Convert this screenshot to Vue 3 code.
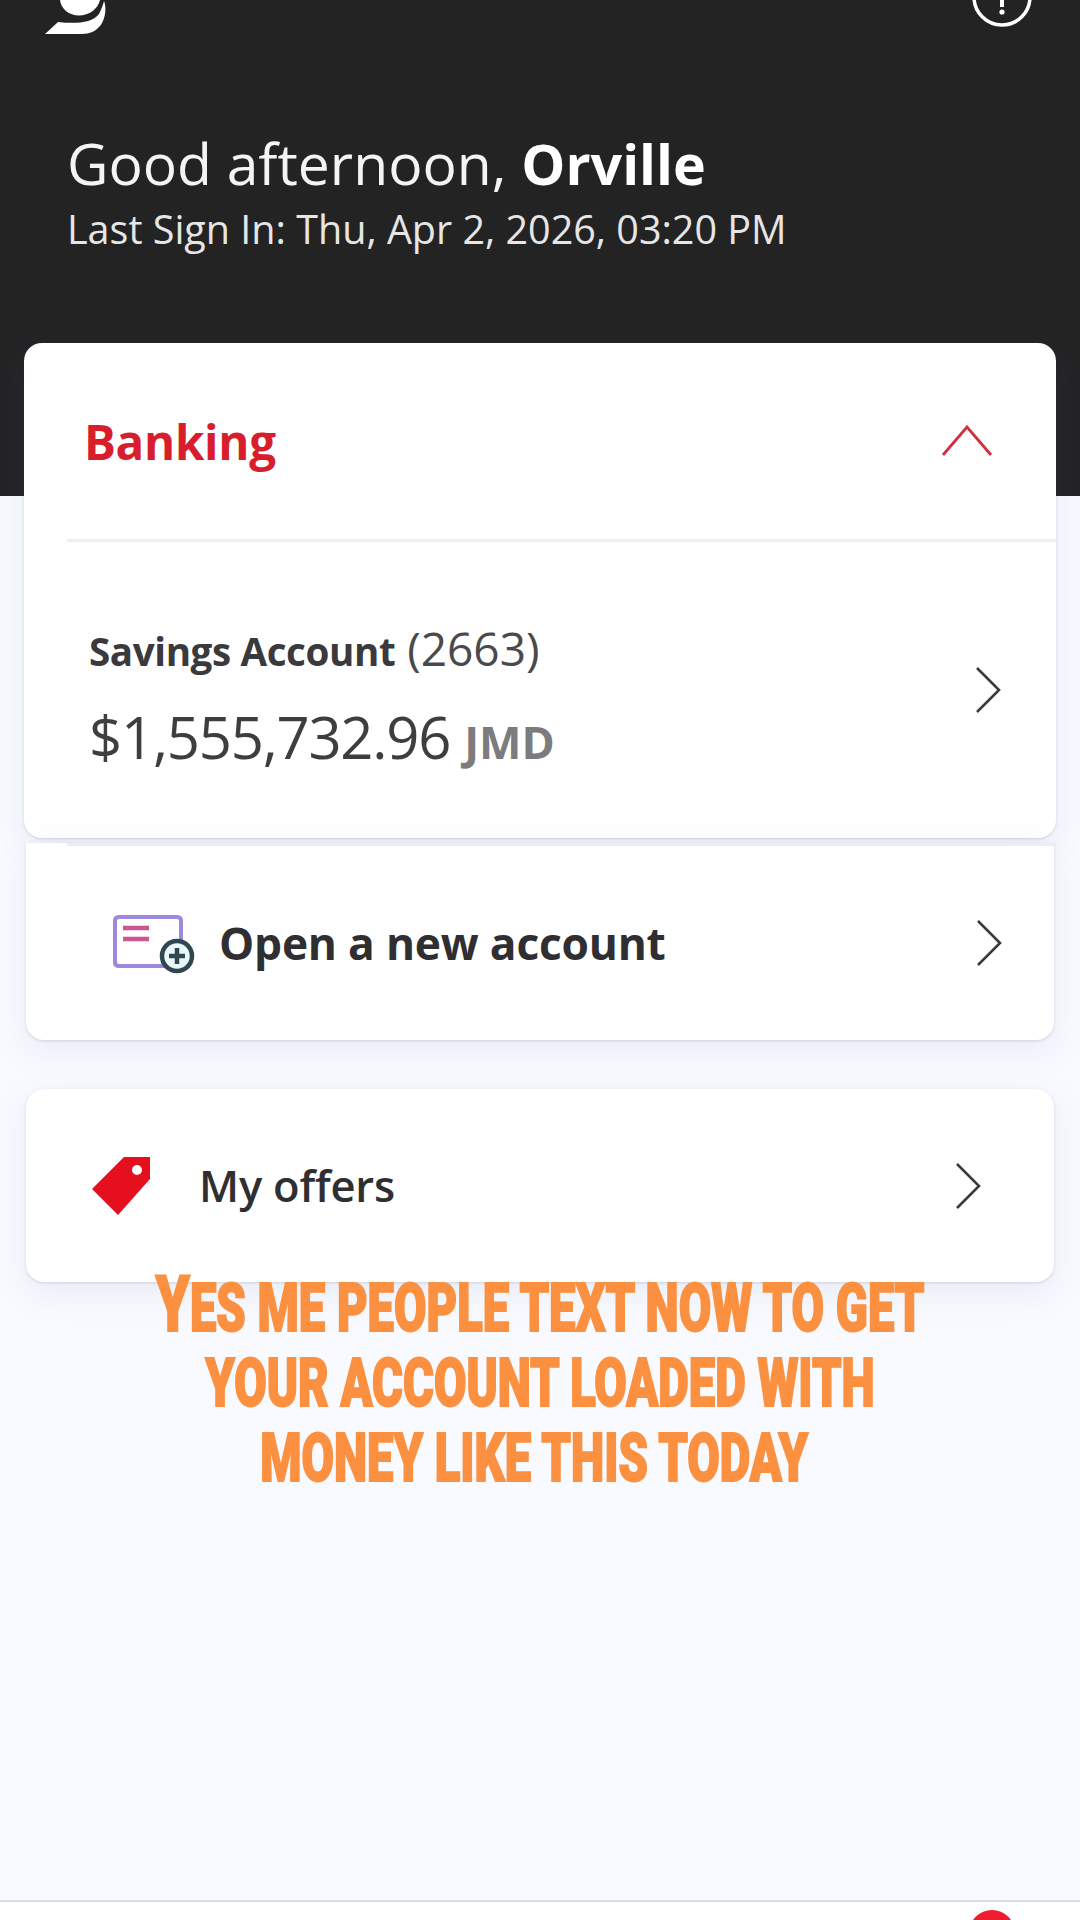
<template>
  <div class="page">
    <header class="hero">
      <div class="topbar">
        <svg class="logo" viewBox="0 0 62 36" width="62" height="36">
          <path d="M16 0C17 9 25 15.500 35 15.500C45 15.500 54 9 56 0Z" fill="#fff" />
          <path d="M1 34L14 22C32 24 48 23 55 14C57 10 59 5 60 1C62 6 62 14 59 21C55 30 47 34 38 34Z" fill="#fff" />
        </svg>
        <svg class="help" viewBox="0 0 64 28" width="64" height="28">
          <circle cx="32" cy="-3" r="28" fill="none" stroke="#fff" stroke-width="3.5" />
          <rect x="30" y="0" width="4" height="7" fill="#fff" />
          <circle cx="32" cy="12" r="2.6" fill="#fff" />
        </svg>
      </div>
      <h1 class="greeting">Good afternoon, <b>{{ userName }}</b></h1>
      <p class="last-sign">Last Sign In: {{ lastSignIn }}</p>
    </header>

    <main class="content">
      <section class="card card-banking">
        <div class="banking-head">
          <span class="banking-title">Banking</span>
          <svg class="caret-up" viewBox="0 0 52 32" width="52" height="32">
            <path d="M2 30L26 2L50 30" fill="none" stroke="#d0303c" stroke-width="2.8" />
          </svg>
        </div>
        <div class="divider"></div>
        <div class="account-row">
          <div class="account-info">
            <div class="account-name"><b>Savings Account</b> (2663)</div>
            <div class="account-balance">$1,555,732.96 <span class="currency">JMD</span></div>
          </div>
          <svg class="chevron" viewBox="0 0 26 48" width="26" height="48">
            <path d="M2 2L24 24L2 46" fill="none" stroke="#3a3a3c" stroke-width="2.6" />
          </svg>
        </div>
      </section>

      <section class="card card-open">
        <div class="divider"></div>
        <div class="link-row row-open">
          <svg class="icon-account" viewBox="0 0 84 62" width="84" height="62">
            <path d="M54 54H8Q4 54 4 50V9Q4 5 8 5H66Q70 5 70 9V28" fill="#fff" stroke="#9d88dd" stroke-width="4" />
            <path d="M12 16H38M12 27H38" stroke="#c9568f" stroke-width="4.500" />
            <circle cx="66" cy="44" r="15" fill="#e9f8fb" stroke="#30474f" stroke-width="4.500" />
            <path d="M58 44H74M66 36V52" stroke="#30474f" stroke-width="4.500" />
          </svg>
          <span class="link-label">Open a new account</span>
          <svg class="chevron" viewBox="0 0 26 48" width="26" height="48">
            <path d="M2 2L24 24L2 46" fill="none" stroke="#3a3a3c" stroke-width="2.6" />
          </svg>
        </div>
      </section>

      <section class="card card-offers">
        <div class="link-row row-offers">
          <svg class="icon-tag" viewBox="0 0 60 60" width="60" height="60">
            <path fill-rule="evenodd" d="M33 1H59V23L27 59L1 33ZM46 9A5 5 0 1 0 46 19A5 5 0 1 0 46 9Z" fill="#e60f1e" />
          </svg>
          <span class="link-label">My offers</span>
          <svg class="chevron" viewBox="0 0 26 48" width="26" height="48">
            <path d="M2 2L24 24L2 46" fill="none" stroke="#3a3a3c" stroke-width="2.6" />
          </svg>
        </div>
      </section>

      <div class="promo">
        <div v-for="(line, i) in promoLines" :key="i" class="promo-line">
          <span v-if="i === 0" class="promo-cap">Y</span>{{ line }}
        </div>
      </div>
    </main>

    <nav class="bottom-nav">
      <span class="nav-dot"></span>
    </nav>
  </div>
</template>

<script setup>
const userName = 'Orville'
const lastSignIn = 'Thu, Apr 2, 2026, 03:20 PM'
const promoLines = [
  'es me people text now to get',
  'your account loaded with',
  'money like this today\u00a0'
]
</script>

<style scoped>
.page {
  width: 1080px; height: 1920px; overflow: hidden;
  display: flex; flex-direction: column;
  background: #f9faff;
  font-family: "Open Sans", "Noto Sans", sans-serif;
}
.hero {
  height: 496px; box-sizing: border-box;
  background: #232324; color: #fff;
  padding: 0 46px 0 67px;
}
.topbar {
  display: flex; justify-content: space-between; align-items: flex-start;
  margin-left: -23px; height: 131px;
}
.logo, .help { display: block; }
.greeting {
  margin: 0; font-size: 57px; line-height: 64px; font-weight: 400;
  color: #f4f4f4; white-space: nowrap;
}
.greeting b { font-weight: 700; color: #fff; font-size: 55.5px; }
.last-sign {
  margin: 8px 0 0; font-size: 39.5px; line-height: 50px; color: #e6e6e6; white-space: nowrap;
}

.content {
  flex: 1; margin-top: -153px;
  display: flex; flex-direction: column;
}
.card {
  background: #fff; border-radius: 18px;
  box-shadow: 0 1px 3px rgba(60,70,110,0.18), 0 10px 34px rgba(90,110,170,0.1);
}
.card-banking { margin: 0 24px; height: 495px; }
.card-open { margin: 5px 26px 0; height: 197px; border-radius: 0 0 18px 18px; }
.card-offers { margin: 49px 26px 0; height: 193px; }

.banking-head {
  height: 196px; box-sizing: border-box;
  display: flex; justify-content: space-between; align-items: center;
  padding: 0 63px 0 60px;
}
.banking-title { font-size: 47.5px; font-weight: 700; color: #d81e2d; letter-spacing: -0.3px; }
.caret-up { display: block; }
.divider { height: 3px; margin-left: 43px; background: #eceef3; }
.card-open .divider { margin-left: 41px; }

.account-row {
  display: flex; justify-content: space-between; align-items: center;
  height: 296px; box-sizing: border-box;
  padding: 0 55px 0 65px;
}
.account-info { padding-top: 17px; }
.account-name { font-size: 46px; line-height: 52px; color: #4a4a4c; white-space: nowrap; }
.account-name b { font-weight: 700; color: #3a3a3c; font-size: 38.6px; letter-spacing: -0.4px; }
.account-balance {
  margin-top: 27px; font-size: 58px; line-height: 66px; color: #3e3e40; white-space: nowrap;
  letter-spacing: -1.2px;
}
.currency { font-size: 45px; font-weight: 700; color: #7c7c7e; letter-spacing: 0; }

.link-row {
  display: flex; align-items: center;
  height: 100%; box-sizing: border-box;
}
.row-open { height: 194px; padding: 0 52px 0 85px; }
.row-offers { padding: 0 73px 0 65px; }
.link-label { flex: 1; font-size: 44.3px; font-weight: 700; color: #2f2f31; letter-spacing: -0.2px; }
.row-open .link-label { margin-left: 24px; }
.row-offers .link-label { margin-left: 48px; font-size: 43.5px; font-weight: 600; }
.chevron, .icon-account, .icon-tag { display: block; flex: none; }

.promo {
  position: relative; margin-top: -15px;
  display: flex; flex-direction: column; align-items: center;
  font-family: Roboto, "Liberation Sans", sans-serif;
  font-weight: 900; color: #fb9140;
  text-transform: uppercase;
  transform: scaleX(0.703);
}
.promo-line {
  font-size: 67px; line-height: 75px; white-space: nowrap;
  -webkit-text-stroke: 2px #fb9140;
}
.promo-cap { font-size: 78px; line-height: 75px; }

.bottom-nav {
  height: 18px; flex: none; overflow: hidden;
  background: #fff; border-top: 2px solid #dcdde1;
  display: flex; justify-content: flex-end;
  padding-right: 65px;
}
.nav-dot {
  width: 46px; height: 46px; margin-top: 8px;
  border-radius: 50%; background: #ee1c2e;
}
</style>
